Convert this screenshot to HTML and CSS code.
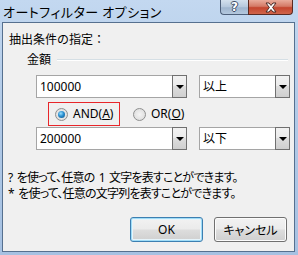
FILE: index.html
```html
<!DOCTYPE html>
<html lang="ja">
<head>
<meta charset="utf-8">
<link rel="stylesheet" href="styles.css">
</head>
<body>
<div class="window">
  <div class="titlebar">
    <span class="title">オートフィルター オプション</span>
    <div class="caption-buttons">
      <div class="cap help"><span>?</span></div>
      <div class="cap close">
        <svg width="14" height="11" viewBox="0 0 14 11"><path d="M2 1 L5 1 L7 3.5 L9 1 L12 1 L8.6 5.5 L12 10 L9 10 L7 7.5 L5 10 L2 10 L5.4 5.5 Z" fill="#fff" stroke="#4a2a26" stroke-width="1" stroke-linejoin="round"/></svg>
      </div>
    </div>
  </div>
  <div class="client">
    <div class="heading">抽出条件の指定：</div>
    <div class="group-label"><span>金額</span><div class="rule"></div></div>
    <div class="row">
      <div class="combo wide"><span class="value">100000</span><div class="drop"><i></i></div></div>
      <div class="combo narrow"><span class="value">以上</span><div class="drop"><i></i></div></div>
    </div>
    <div class="radios">
      <label class="radio selected-box"><span class="dot on"></span>AND(<u>A</u>)</label>
      <label class="radio"><span class="dot"></span>OR(<u>O</u>)</label>
    </div>
    <div class="row row2">
      <div class="combo wide"><span class="value">200000</span><div class="drop"><i></i></div></div>
      <div class="combo narrow"><span class="value">以下</span><div class="drop"><i></i></div></div>
    </div>
    <div class="hints">
      <p>? を使って、任意の 1 文字を表すことができます。</p>
      <p>* を使って、任意の文字列を表すことができます。</p>
    </div>
    <div class="buttons">
      <div class="btn default">OK</div>
      <div class="btn">キャンセル</div>
    </div>
  </div>
</div>
</body>
</html>
```
FILE: styles.css
```css
html, body {
  margin: 0;
  padding: 0;
}
body {
  width: 298px;
  height: 255px;
  overflow: hidden;
  font-family: "Noto Sans", "Noto Sans CJK JP", sans-serif;
  font-size: 12px;
  color: #000;
}
.window {
  width: 298px;
  height: 255px;
  box-sizing: border-box;
  padding: 0 3px 3px 2px;
  background: linear-gradient(180deg, #c3d8f0 0%, #b2cbe8 40%, #a6c1e2 100%);
  display: flex;
  flex-direction: column;
}
.titlebar {
  height: 22px;
  display: flex;
  align-items: flex-start;
  justify-content: space-between;
  margin: 0 -3px 0 -2px;
}
.title {
  font-family: "Noto Sans CJK JP", sans-serif;
  font-size: 13px;
  line-height: 13px;
  margin-top: 5px;
  padding-left: 3px;
  color: #000;
  font-feature-settings: "palt";
  letter-spacing: 0.5px;
}
.caption-buttons {
  display: flex;
  margin-right: 5px;
}
.cap {
  height: 15px;
  box-sizing: border-box;
  border: 1px solid #4d5f7a;
  border-top: none;
  display: flex;
  align-items: center;
  justify-content: center;
}
.help {
  width: 28px;
  border-radius: 0 0 0 4px;
  border-right: none;
  background: linear-gradient(180deg, #d3e0ee 0%, #b5c8dd 50%, #9fb5cf 55%, #b4c8de 100%);
}
.help span {
  color: #fff;
  font-family: "DejaVu Sans", sans-serif;
  font-weight: bold;
  font-size: 12px;
  line-height: 12px;
  text-shadow: -1px 0 #3d4e66, 1px 0 #3d4e66, 0 -1px #3d4e66, 0 1px #3d4e66;
}
.close {
  width: 45px;
  border-color: #5a2a22;
  border-radius: 0 0 4px 0;
  background: linear-gradient(180deg, #e9ac9c 0%, #d47a66 45%, #c4452e 55%, #d0654a 100%);
}
.client {
  flex: 1;
  background: #f0f0f0;
  border: 1px solid #56708f;
  display: flex;
  flex-direction: column;
  font-family: "Noto Sans", "Noto Sans CJK JP", sans-serif;
  font-feature-settings: "palt";
}
.heading {
  margin-top: 9px;
  margin-left: 6px;
  line-height: 16px;
  height: 16px;
  font-feature-settings: normal;
}
.group-label {
  display: flex;
  align-items: center;
  margin-top: 4px;
  margin-left: 24px;
  margin-right: 6px;
  height: 16px;
  line-height: 16px;
}
.rule {
  flex: 1;
  margin-left: 6px;
  height: 1px;
  background: #d5dfe5;
  border-bottom: 1px solid #fff;
}
.row {
  display: flex;
  gap: 12px;
  margin-top: 7px;
  margin-left: 33px;
}
.row2 {
  margin-top: 1px;
}
.combo {
  height: 23px;
  box-sizing: border-box;
  border: 1px solid #a5a5a5;
  background: #fff;
  display: flex;
  align-items: stretch;
}
.combo.wide { width: 151px; }
.combo.narrow { width: 91px; }
.value {
  flex: 1;
  padding-left: 3px;
  line-height: 21px;
}
.drop {
  width: 15px;
  box-sizing: border-box;
  border: 1px solid #707070;
  margin: -1px -1px -1px 0;
  background: linear-gradient(180deg, #f2f2f2 0%, #ebebeb 45%, #dddddd 50%, #cfcfcf 100%);
  display: flex;
  align-items: center;
  justify-content: center;
}
.drop i {
  width: 0;
  height: 0;
  border-left: 4px solid transparent;
  border-right: 4px solid transparent;
  border-top: 4px solid #000;
}
.radios {
  display: flex;
  margin-top: 4px;
  margin-left: 45px;
  gap: 8px;
  height: 24px;
}
.radio {
  display: flex;
  align-items: center;
  line-height: 16px;
}
.selected-box {
  width: 72px;
  box-sizing: border-box;
  border: 1px solid #e8262a;
  padding-left: 6px;
}
.dot {
  width: 13px;
  height: 13px;
  box-sizing: border-box;
  border-radius: 50%;
  border: 1px solid #8e8f8f;
  background: radial-gradient(circle at 50% 50%, #f4f4f4 0%, #d8d8d8 100%);
  margin-right: 5px;
  display: flex;
  align-items: center;
  justify-content: center;
}
.dot.on::after {
  content: "";
  width: 7px;
  height: 7px;
  border-radius: 50%;
  background: radial-gradient(circle at 40% 35%, #9be0ff 0%, #2a8fd0 45%, #0d4f82 100%);
}
.radio:not(.selected-box) {
  padding-left: 5px;
}
.hints {
  margin-top: 20px;
  margin-left: 5px;
  letter-spacing: -0.8px;
  word-spacing: 2px;
}
.hints p {
  margin: 0;
  line-height: 16px;
  height: 16px;
}
.buttons {
  display: flex;
  justify-content: flex-end;
  gap: 11px;
  margin-top: 15px;
  margin-right: 7px;
}
.btn {
  width: 73px;
  height: 25px;
  box-sizing: border-box;
  border: 1px solid #707070;
  border-radius: 3px;
  background: linear-gradient(180deg, #f2f2f2 0%, #ebebeb 48%, #dddddd 52%, #cfcfcf 100%);
  display: flex;
  align-items: center;
  justify-content: center;
  box-shadow: inset 0 0 0 1px #fcfcfc;
}
.btn.default {
  border-color: #3c7fb1;
  box-shadow: inset 0 0 0 1px #9fdcf7, inset 0 0 0 2px #e6f4fb;
}
```
